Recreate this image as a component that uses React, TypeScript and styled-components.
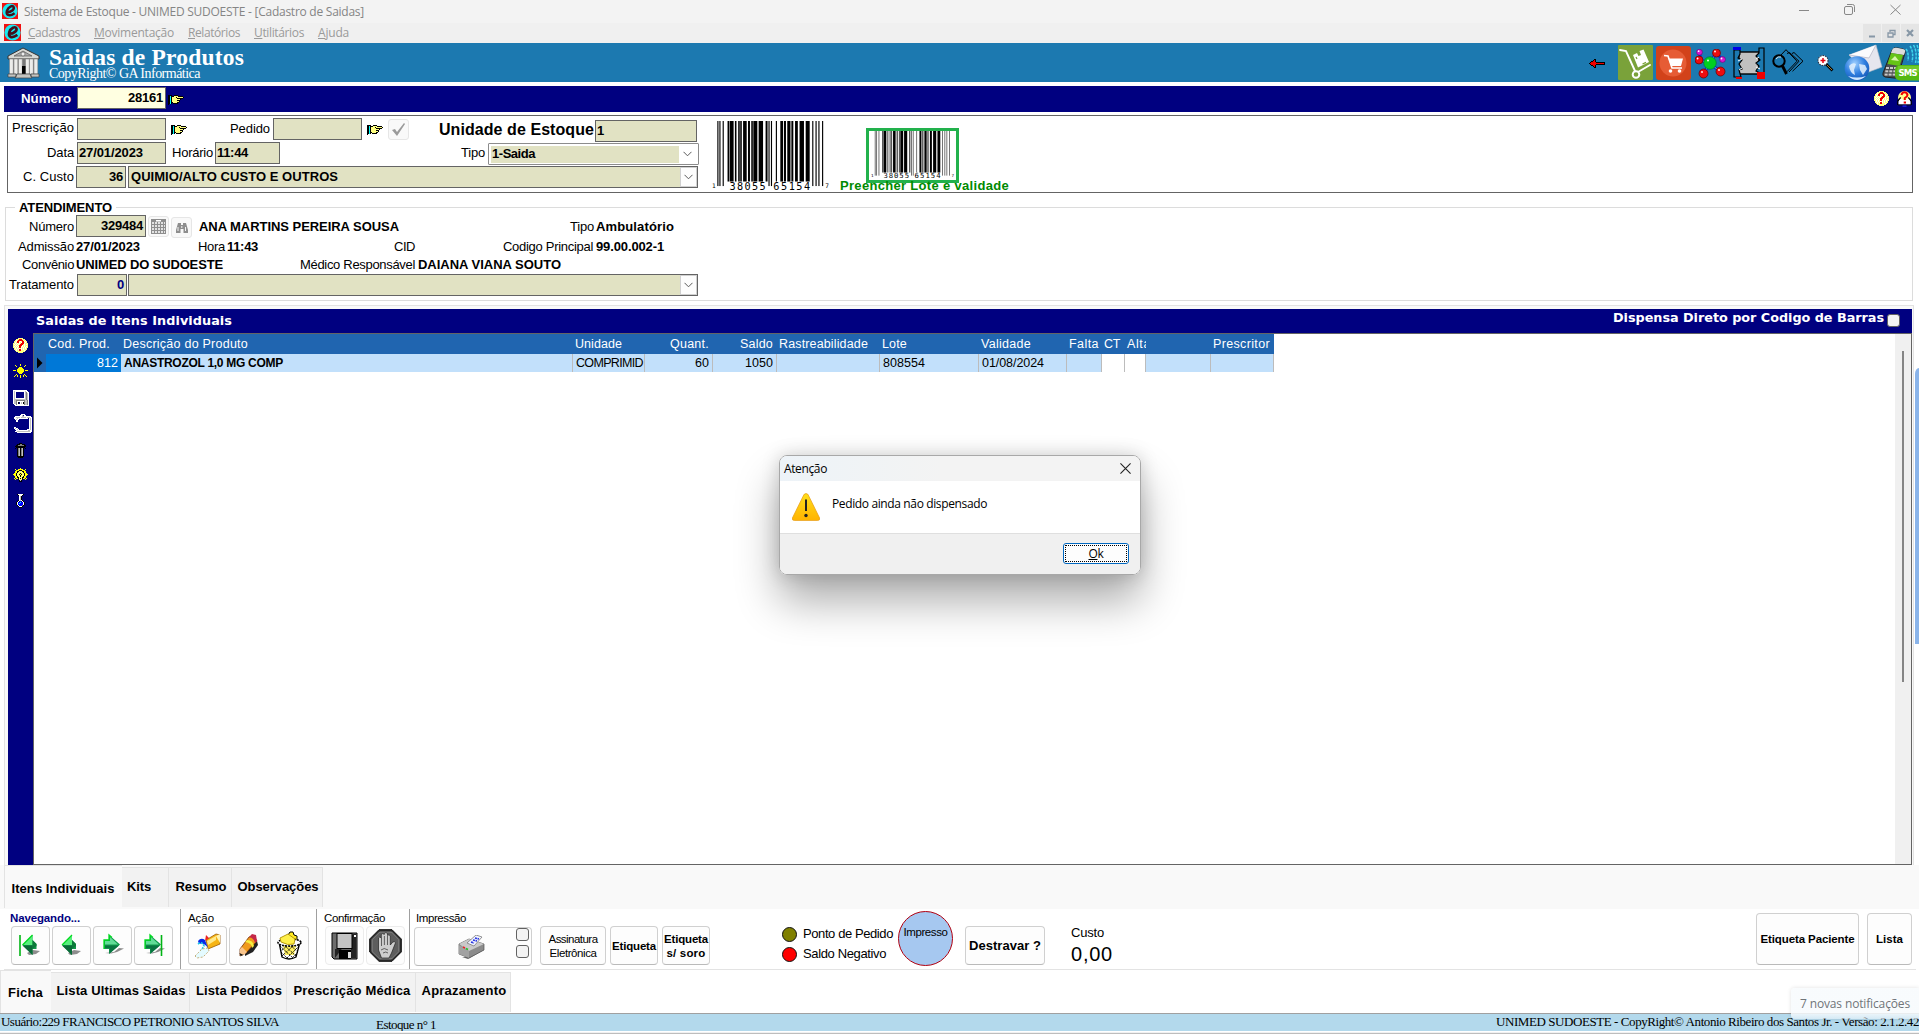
import React, { useLayoutEffect, useRef } from "react";
import styled, { createGlobalStyle, css } from "styled-components";

const SANS = '"Liberation Sans", Arial, sans-serif';
const SERIF = '"Liberation Serif", "Times New Roman", serif';
const UI = '"Open Sans", "Noto Sans", sans-serif';
const NAVY = "#000080";

const Global = createGlobalStyle`
  *{box-sizing:border-box}
  body{margin:0;overflow:hidden;background:#fff;font-family:${SANS};color:#000}
`;

/* ---------- text ---------- */

const FitBox = styled.span<{ $w: number; $ml?: number }>`
  display: block; flex: none; white-space: pre;
  width: ${(p) => p.$w}px; margin-left: ${(p) => p.$ml ?? 0}px;
`;

type FitProps = { w: number; ml?: number; className?: string; children: React.ReactNode };

function Fit({ w, ml, className, children }: FitProps) {
  const ref = useRef<HTMLSpanElement>(null);
  useLayoutEffect(() => {
    const el = ref.current;
    if (!el) return;
    el.style.letterSpacing = "0px";
    const n = (el.textContent || "").length;
    el.style.letterSpacing = `${(w - el.getBoundingClientRect().width) / n}px`;
  }, [w, children]);
  return (
    <FitBox $w={w} $ml={ml} className={className}>
      <span ref={ref}>{children}</span>
    </FitBox>
  );
}

const Caption = styled(Fit)`font: 13px/16px ${SANS};`;
const Value = styled(Fit)`font: bold 13px/16px ${SANS};`;
const SmallCaption = styled(Fit)`font: 11.5px/14px ${SANS};`;
const SmallBold = styled(Fit)`font: bold 11.5px/14px ${SANS};`;
const NavCaption = styled(SmallBold)`color: ${NAVY};`;
const WindowTitle = styled(Fit)`font: 12px/18px ${UI}; color: #858585;`;
const MenuItem = styled(Fit)`font: 12px/17px ${UI}; color: #9a9a9a;`;
const DialogText = styled(Fit)`font: 12px/16px ${UI};`;
const StatusText = styled(Fit)`font: 13px/16px ${SERIF};`;
const NoticeText = styled(Fit)`font: 12px/16px ${UI}; color: #707579;`;
const ScreenTitle = styled(Fit)`font: bold 23.5px/22px ${SERIF}; color: #fff;`;
const ScreenSub = styled(Fit)`font: 14px/12px ${SERIF}; color: #fff;`;
const PanelTitle = styled(Fit)`font: bold 12.8px/16px "DejaVu Sans", Verdana, sans-serif; color: #fff;`;
const BarCaption = styled(Fit)`font: bold 13.3px/16px ${SANS}; color: #fff;`;
const UnitCaption = styled(Fit)`font: bold 16px/18px ${SANS};`;
const GreenNote = styled(Fit)`font: bold 13px/14px ${SANS}; color: #008a00; position: relative; margin-top: -4px;`;
const CostValue = styled(Fit)`font: 20px/22px ${SANS};`;
const HeadText = styled(Fit)`font: 12.5px/20px ${SANS}; color: #fff;`;
const CellText = styled(Fit)`font: 12.5px/19px ${SANS};`;
const CellBold = styled(Fit)`font: bold 12px/19px ${SANS};`;

/* ---------- window chrome ---------- */

const Window = styled.div`width: 1919px; height: 1034px; display: flex; flex-direction: column; overflow: hidden; position: relative;`;
const TitleBar = styled.div`height: 23px; flex: none; background: #f3f3f3; display: flex; align-items: flex-start; padding: 3px 18px 0 2px;`;
const MenuBar = styled.div`height: 20px; flex: none; background: #f0f0f0; display: flex; align-items: flex-start; padding: 1px 0 0 4px;`;
const Spring = styled.div`flex: 1;`;
const Controls = styled.div`display: flex; gap: 35px; padding-top: 1px;`;
const MdiButton = styled.div`width: 18px; height: 18px; background: #e5e5e5; margin-left: 1px; display: grid; place-items: center;`;
const HeaderBar = styled.div`height: 39px; flex: none; background: #1c79b0; display: flex; padding-left: 7px; overflow: hidden;`;
const HeaderText = styled.div`display: flex; flex-direction: column; margin-left: 9px; padding-top: 3px; gap: 0;`;
const ToolIcons = styled.div`display: flex; align-items: flex-start;`;
const Slot = styled.div<{ $ml?: number; $mt?: number }>`
  flex: none; margin-left: ${(p) => p.$ml ?? 0}px; margin-top: ${(p) => p.$mt ?? 0}px; line-height: 0;
  svg { display: block; }
`;

/* ---------- form ---------- */

const NumberBar = styled.div`
  height: 26px; flex: none; margin: 4px 3px 3px 4px; background: ${NAVY};
  display: flex; align-items: flex-start; padding: 1px 4px 0 17px;
`;
const Field = styled.div<{ $w: number; $ml?: number; $bg?: string; $right?: boolean; $color?: string }>`
  flex: none; width: ${(p) => p.$w}px; height: 22px; margin-left: ${(p) => p.$ml ?? 0}px;
  background: ${(p) => p.$bg ?? "#e1e2c3"}; border: 1px solid #646464; color: ${(p) => p.$color ?? "#000"};
  display: flex; align-items: flex-start; padding: 2px 2px 0 1px;
  justify-content: ${(p) => (p.$right ? "flex-end" : "flex-start")};
`;
const Combo = styled(Field)`padding: 0 1px 0 2px; align-items: center; justify-content: space-between;`;
const Select = styled.div`
  width: 211px; height: 22px; margin-left: 3px; flex: none; background: #fff; border: 1px solid #8c8c8c; border-radius: 1px;
  display: flex; align-items: center; padding: 0 2px 0 2px;
`;
const SelectValue = styled.div`width: 188px; height: 17px; background: #e1e2c3; padding-left: 1px;`;
const Arrow = styled.div<{ $boxed?: boolean }>`
  width: 17px; height: 20px; display: grid; place-items: center; margin-left: auto;
  ${(p) => p.$boxed && css`background: #fdfdfd; border: 1px solid #d0d0d0; margin-right: -1px;`}
`;
const OrderPanel = styled.div`
  height: 78px; flex: none; margin: 0 6px 0 7px; border: 1px solid #646464; background: #fff; display: flex;
`;
const OrderForm = styled.div`width: 691px; flex: none; display: flex; flex-direction: column;`;
const Line = styled.div<{ $h: number; $pl?: number; $pt?: number }>`
  display: flex; flex: none; align-items: flex-start; height: ${(p) => p.$h}px;
  padding-left: ${(p) => p.$pl ?? 0}px; padding-top: ${(p) => p.$pt ?? 0}px;
`;
const Drop = styled.div<{ $mt: number }>`flex: none; display: flex; margin-top: ${(p) => p.$mt}px;`;
const TinyButton = styled.div<{ $ml: number; $mt?: number }>`
  width: 21px; height: 21px; flex: none; margin-left: ${(p) => p.$ml}px; margin-top: ${(p) => p.$mt ?? 0}px;
  background: #f9f9f9; border: 1px solid #e6e6e6; border-radius: 3px; display: grid; place-items: center;
`;
const LotCheck = styled.div`display: flex; flex-direction: column; width: 170px; padding-top: 12px; margin-left: 11px;`;
const GreenFrame = styled.div`width: 93px; height: 55px; margin-left: 26px; border: 3px solid #22b14c; background: #fff; padding: 0 0 0 2px; flex: none;`;

const CareGroup = styled.fieldset`
  height: 101px; flex: none; margin: 7px 6px 0 5px; padding: 0; min-width: 0; border: 1px solid #dcdcdc;
  display: flex; flex-direction: column; background: #fff;
`;
const CareLegend = styled.legend`margin-left: 9px; padding: 0 4px; height: 15px; line-height: 15px;`;

/* ---------- items panel ---------- */

const ItemsFrame = styled.div`
  height: 560px; flex: none; margin: 4px 5px 0 4px; border-top: 1px solid #e3e3e3; border-left: 1px solid #e3e3e3;
  border-right: 1px solid #e3e3e3; background: #f9f9f9; padding: 3px 1px 0 3px; display: flex; flex-direction: column;
`;
const ItemsTitle = styled.div`height: 24px; flex: none; background: ${NAVY}; display: flex; padding-left: 28px; align-items: flex-start;`;
const ItemsBody = styled.div`flex: 1; display: flex; min-height: 0;`;
const SideTools = styled.div`width: 25px; flex: none; background: ${NAVY}; display: flex; flex-direction: column; align-items: center;`;
const GridArea = styled.div`
  flex: 1; background: #fff; border: 1px solid #646464; display: flex; align-items: flex-start; min-width: 0;
`;
const Columns = "12px 75px 452px 72px 68px 64px 103px 99px 88px 35px 23px 21px 65px 63px";
const GridHead = styled.div`display: grid; grid-template-columns: ${Columns}; height: 20px; background: #2065b0; align-items: center;`;
const GridRow = styled.div`display: grid; grid-template-columns: ${Columns}; height: 18px;`;
const HeadCell = styled.div<{ $right?: boolean }>`
  display: flex; overflow: hidden; padding: 0 4px 0 2px; justify-content: ${(p) => (p.$right ? "flex-end" : "flex-start")};
`;
const Cell = styled.div<{ $right?: boolean; $bg?: string; $flat?: boolean }>`
  display: flex; overflow: hidden; padding: 0 3px; justify-content: ${(p) => (p.$right ? "flex-end" : "flex-start")};
  background: ${(p) => p.$bg ?? "#c2e0fb"}; color: ${(p) => (p.$flat ? "#fff" : "#000")};
  border-right: ${(p) => (p.$flat ? "none" : "1px solid #bcbcbc")};
`;
const MarkerCell = styled(Cell)`padding: 0 2px;`;
const Scroll = styled.div`width: 16px; margin-left: auto; align-self: stretch; background: #f0f0f0; padding: 17px 0 0 7px;`;
const Thumb = styled.div`width: 2px; height: 331px; background: #858585;`;
const CheckBox = styled.div<{ $ml?: number; $mt?: number }>`
  width: 13px; height: 13px; flex: none; border: 1px solid #626262; border-radius: 3px; background: #f3f3f3;
  margin-left: ${(p) => p.$ml ?? 0}px; margin-top: ${(p) => p.$mt ?? 0}px;
`;

/* ---------- tabs, toolbar, status ---------- */

const TabStrip = styled.div<{ $h: number; $bg: string; $pl: number }>`
  height: ${(p) => p.$h}px; flex: none; background: ${(p) => p.$bg}; padding-left: ${(p) => p.$pl}px; display: flex; align-items: flex-start;
`;
const Tab = styled.div<{ $w: number; $active?: boolean; $h: number; $top?: number }>`
  width: ${(p) => p.$w}px; flex: none; display: flex; justify-content: center;
  ${(p) => p.$active
    ? css`height: ${p.$h + 3}px; background: #f9f9f9; border: solid #e3e3e3; border-width: 1px 0 0 1px; padding: ${p.$top ?? 15}px 1px 0 0;`
    : css`height: ${p.$h}px; margin-top: 2px; background: #f2f2f2; border: solid #e3e3e3; border-width: 1px 1px 0 0; padding: ${p.$top ?? 11}px 0 0 2px;`}
`;
const Toolbar = styled.div`height: 61px; flex: none; background: #fff; margin: 0 3px 0 4px; border-bottom: 1px solid #e3e3e3; display: flex; padding-left: 6px;`;
const Group = styled.div<{ $w: number; $sep?: boolean; $pl?: number }>`
  width: ${(p) => p.$w}px; flex: none; padding-left: ${(p) => p.$pl ?? 0}px; padding-top: 2px;
  border-right: ${(p) => (p.$sep ? "1px solid #a0a0a0" : "none")}; display: flex; flex-direction: column; gap: 1px;
`;
const Buttons = styled.div<{ $ml?: number }>`display: flex; gap: 2px; margin-left: ${(p) => p.$ml ?? 0}px;`;
const PushButton = styled.div<{ $w?: number; $h?: number; $ml?: number; $mt?: number; $faint?: boolean }>`
  width: ${(p) => p.$w ?? 39}px; height: ${(p) => p.$h ?? 39}px; flex: none;
  margin-left: ${(p) => p.$ml ?? 0}px; margin-top: ${(p) => p.$mt ?? 0}px;
  border: 1px solid ${(p) => (p.$faint ? "#ececec" : "#d0d0d0")}; border-bottom-color: ${(p) => (p.$faint ? "#ececec" : "#bababa")};
  border-radius: 4px; background: #fdfdfd; display: flex; flex-direction: column; align-items: center; justify-content: center;
  svg { display: block; }
`;
const PrintButton = styled(PushButton)`flex-direction: row; justify-content: flex-end; padding-right: 2px; align-items: flex-start;`;
const CheckStack = styled.div`display: flex; flex-direction: column; gap: 4px; margin-left: 30px;`;
const Legend = styled.div`display: flex; flex-direction: column; gap: 4px; margin-left: 72px; padding-top: 17px;`;
const LegendRow = styled.div`display: flex; align-items: center; height: 16px;`;
const Dot = styled.span<{ $c: string }>`width: 15px; height: 15px; border-radius: 50%; border: 1px solid #111; background: ${(p) => p.$c}; margin-right: 6px;`;
const PrintedBadge = styled.div`
  width: 55px; height: 55px; border-radius: 50%; background: #a6c8f0; border: 1px solid #b00010; flex: none;
  margin: 2px 0 0 5px; padding-top: 13px; display: flex; justify-content: center;
`;
const Cost = styled.div`margin-left: 26px; padding-top: 16px; display: flex; flex-direction: column; gap: 2px;`;
const StatusBar = styled.div`
  height: 18px; flex: none; background: #b3d9ec; border-top: 1px solid #a0a0a0; display: flex; align-items: flex-start; padding-left: 1px;
`;
const StatusEdge = styled.div`height: 3px; flex: none; background: #f0f0f0; border-top: 1px solid #fff; border-bottom: 1px solid #bdbdbd;`;

/* ---------- floating pieces ---------- */

const EdgeHandle = styled.div`position: absolute; right: 0; top: 368px; width: 4px; height: 276px; background: #8ab4ea; border-top-left-radius: 4px 6px;`;
const Notice = styled.div`
  position: absolute; right: 0; top: 988px; width: 128px; height: 31px; padding: 8px 0 0 9px; border-radius: 4px 0 0 4px;
  background: linear-gradient(rgba(248, 251, 253, 0.97) 75%, rgba(240, 247, 252, 0.55)); box-shadow: 0 0 4px rgba(0, 0, 0, 0.12);
`;
const Dialog = styled.div`
  position: absolute; left: 779px; top: 455px; width: 362px; height: 120px; border: 1px solid #a8a8a8; border-radius: 8px; overflow: hidden;
  background: #fff; display: flex; flex-direction: column;
`;
const DialogShade = styled.div`
  position: absolute; left: 779px; top: 455px; width: 362px; height: 120px; border-radius: 8px;
  box-shadow: 0 26px 44px rgba(0, 0, 0, 0.33), 0 0 18px rgba(0, 0, 0, 0.17);
`;
const DialogTitle = styled.div`height: 25px; flex: none; background: linear-gradient(90deg, #edf3f8, #f3f3f3 45%); display: flex; padding: 5px 9px 0 4px; justify-content: space-between;`;
const DialogBody = styled.div`height: 52px; flex: none; display: flex; padding: 12px 0 0 12px;`;
const DialogFoot = styled.div`flex: 1; background: #f0f0f0; border-top: 1px solid #dfdfdf; display: flex; justify-content: flex-end; padding: 9px 11px 0 0;`;
const OkButton = styled.div`width: 66px; height: 21px; border: 1px solid #0067c0; border-radius: 3px; background: #fdfdfd; padding: 1px;`;
const OkFocus = styled.div`height: 17px; border: 1px dotted #000; display: flex; justify-content: center;`;
const OkText = styled(Fit)`font: 12px/15px ${UI};`;

/* ---------- drawings ---------- */

const PALETTE: Record<string, string> = {
  k: "#000", w: "#fff", y: "#ffff80", Y: "#ffff00", c: "#00ffff", r: "#f00000", g: "#808080", l: "#c0c0c0", b: "#0000ff",
};

function Pixels({ rows }: { rows: string[] }) {
  const w = Math.max(...rows.map((r) => r.length));
  return (
    <svg width={w} height={rows.length} viewBox={`0 0 ${w} ${rows.length}`} shapeRendering="crispEdges">
      {rows.flatMap((row, y) =>
        row.split("").map((ch, x) => (PALETTE[ch] ? <rect key={`${x}-${y}`} x={x} y={y} width={1} height={1} fill={PALETTE[ch]} /> : null))
      )}
    </svg>
  );
}

const HAND = [
  "kkkk..kkkk......",
  "kkckkkyyyykkkkk.",
  "kkckyyyykyyyyyyk",
  "kkckyyyyykkkkkk.",
  "kkckyyyyyyyyk...",
  "kkckyyyyykkk....",
  "kkckyyyyyyyk....",
  "kkckkyyyykk.....",
  "kkck.kkkkk......",
  "k...............",
];
const HELP = [
  ".....yyyyy.....",
  "...yyyrrryyy...",
  "..ywyrrrrryyy..",
  ".yywrrywyrrwyy.",
  ".ywyrrwywrrywy.",
  "yywywywyrrrwyyy",
  "ywywywyrrrywywy",
  "yywywyrrrwywyyy",
  "ywywywrrywywywy",
  "yywywyrrwywywyy",
  ".ywywywywywywy.",
  ".yywywrrwywyyy.",
  "..ywyyrryyywy..",
  "...yyyyyyyyy...",
  ".....yyyyy.....",
];
const SUN = [
  ".......Y.......",
  "..Y....Y....Y..",
  "...Y.......Y...",
  "......YYY......",
  ".....YYYYY.....",
  "....YYYYYYY....",
  "YYY.YYYYYYY.YYY",
  "....YYYYYYY....",
  ".....YYYYY.....",
  "......YYY......",
  "...Y.......Y...",
  "..Y.Y..Y..Y.Y..",
  ".Y..Y..Y..Y..Y.",
  ".......Y.......",
];
const DISK = [
  "wwwwwwwwwwwwww..",
  "wlwwwwwwwwwwlww.",
  "wlw........wlgww",
  "wlw........wlglw",
  "wlw........wlglw",
  "wlw........wlglw",
  "wlw........wlglw",
  "wlw........wlglw",
  "wlwwwwwwwwwwlglw",
  "wllllllllllllglw",
  "wllgggggggggllgw",
  "wllgwwwwwwwgllgw",
  "wllgwk.wlwkgllgw",
  "wllgwk.wlwkgllgw",
  ".wwgwwwwwwwgllgw",
  "..wwwwwwwwwwwwww",
];
const CLIP = [
  ".......wwww.......",
  "......wwl.ww......",
  ".wwwwwwwllwwwwwww.",
  "wwllllwlllllwlllww",
  "wwwlwwwwwwwwww.wlw",
  ".wlww..........wlw",
  "..ww...........wlw",
  "..ww...........wlw",
  "...............wlw",
  "...............wlw",
  "...............wlw",
  "...............wlw",
  "...............wlw",
  "ww.............wlw",
  "wlww...........wlw",
  ".wwlw........wwwlw",
  "..wwwwwwwwwwwwllww",
  ".wwlllllllllllllww",
  "...wwwwwwwwwwwwww.",
];
const TRASH = [
  "....kkk....",
  "..kkkggkkk.",
  ".kkggggggkk",
  "kkkkkkkkkkk",
  ".kkkkkkkkk.",
  "k.kglkglk.k",
  "..kglkglk..",
  "..kglkglk..",
  "..kglkglk..",
  "..kglkglk..",
  "..kglkglk..",
  "..kglkglk..",
  "..kglkglk..",
  "..kkkkkkk..",
  "...kkkkk...",
];
const BULB = [
  ".......Y.......",
  "..Y..YYYYY..Y..",
  "...YYYkkkYYY...",
  "..YYkkyyykkYY..",
  "..YYkyyyyykYY..",
  ".YYkyyYkYyykYY.",
  "YYYkyykykyykYYY",
  ".YYkyyYkYyykYY.",
  "..YYkyykyykYY..",
  "..YYkkyyykkYY..",
  ".Y.YYkykykYY.Y.",
  "..Y..kyyyk..Y..",
  "......klk......",
  "......kkk......",
];
const FLASK = [
  ".kwwwwwk.",
  "..kwwwk..",
  "...wlk...",
  "...wlk...",
  "...wlk...",
  "...wlk...",
  "..kwlwk..",
  ".kw.b.wk.",
  "kwbbcbbwk",
  "kwbcbbbwk",
  "kwbbbbbwk",
  ".kwbbbgk.",
  "..kwwwk..",
  "...kkk...",
];
const RED_ARROW = [
  ".....kk.........",
  "....krk.........",
  "..kkrrk.........",
  ".krrrrrkkkkkkkkk",
  "krrrrrrrrrrrrrrk",
  ".krrrrrkkkkkkkkk",
  "..kkrrk.........",
  "....krk.........",
  ".....kk.........",
];

const AppIcon = ({ s }: { s: number }) => (
  <svg width={s} height={s} viewBox="0 0 16 16">
    <rect width="16" height="16" fill="#f01010" />
    <circle cx="8" cy="8" r="7.600" fill="#18e8f0" />
    <path d="M5 9.200C9.500 9.200 12.600 6.200 11.600 4 10.600 2 6.400 3.600 5 7.600 3.800 11.600 6.600 14.400 12.600 10.200" fill="none" stroke="#42101c" strokeWidth="2.500" />
  </svg>
);

const Bank = () => (
  <svg width="33" height="32" viewBox="0 0 33 32">
    <path d="M1 9L16 1l16 8v3H1z" fill="#d8d8d4" stroke="#333" />
    <path d="M7 9l9-5 9 5z" fill="#aaa" stroke="#555" strokeWidth=".7" />
    <circle cx="16" cy="7" r="2" fill="#eee" stroke="#555" strokeWidth=".6" />
    <path d="M3 12h27v15H3z" fill="#777" />
    {[2.5, 7, 11.5, 18.5, 22.5, 27].map((x) => <path key={x} d={`M${x} 12h3.800v15H${x}z`} fill="#ececea" stroke="#777" strokeWidth=".5" />)}
    <path d="M15 19h3.500v8H15z" fill="#000" />
    <path d="M10 27h13l2 4H8zM1 27h8v3H1zM24 27h8v3h-8z" fill="#c4c4c0" stroke="#444" strokeWidth=".7" />
  </svg>
);

const Dolly = () => (
  <svg width="35" height="35" viewBox="0 0 35 35">
    <rect width="35" height="35" rx="1" fill="#7aa23a" />
    <path d="M2 5l6 1 9 20M20 27l12-7" fill="none" stroke="#fff" strokeWidth="1.900" strokeLinecap="round" />
    <path d="M15 10l4-2 1.500 3 2.500-1L21.500 6l4-1.500L31 17l-11 5.500z" fill="#fff" />
    <path d="M24.500 19l3.500-1.600M18 12l1 2" stroke="#7aa23a" strokeWidth="1.200" />
    <circle cx="18" cy="29.500" r="3.300" fill="#7aa23a" stroke="#fff" strokeWidth="2" />
  </svg>
);

const Cart = () => (
  <svg width="35" height="34" viewBox="0 0 35 34">
    <rect width="35" height="34" rx="3" fill="#d2421a" />
    <circle cx="17" cy="17" r="13.500" fill="#e65c35" />
    <path d="M8 9.500l4 .5 4 12h10" fill="none" stroke="#fff" strokeWidth="1.600" />
    <path d="M12.500 12.500h14.500l-2 7.500H15z" fill="#fff" />
    <circle cx="14.500" cy="25" r="1.800" fill="#fff" /><circle cx="23.500" cy="25" r="1.800" fill="#fff" />
  </svg>
);

const Molecule = () => (
  <svg width="32" height="30" viewBox="0 0 32 30">
    <path d="M5 11l9 3 8-10M9 23l6-8 10 7M22 5l6 6M5 3v8" stroke="#0030d0" strokeWidth="3" fill="none" />
    <path d="M5 11l9 3 8-10M9 23l6-8 10 7" stroke="#9ab8f0" strokeWidth=".8" fill="none" />
    <circle cx="15" cy="14" r="6.300" fill="#00d020" stroke="#064" strokeWidth=".6" />
    {[[4, 11, 4], [21.5, 4, 4], [8.5, 24.5, 4.5], [25.5, 22.5, 4.5]].map(([x, y, r]) => <circle key={x} cx={x} cy={y} r={r} fill="#ee0c10" stroke="#600" strokeWidth=".7" />)}
    <circle cx="4.500" cy="3.200" r="2.900" fill="#d818d0" stroke="#606" strokeWidth=".6" />
    <circle cx="27.500" cy="10.500" r="2.900" fill="#d818d0" stroke="#606" strokeWidth=".6" />
    {[[2.6, 9.5], [20, 2.5], [7, 23], [24, 21], [13, 11.5], [3.6, 2.2], [26.5, 9.5]].map(([x, y]) => <circle key={x} cx={x} cy={y} r=".9" fill="#fff" />)}
  </svg>
);

const Puzzle = () => (
  <svg width="32" height="32" viewBox="0 0 32 32">
    <rect x="6" y="5" width="20" height="22" fill="#c0c0c0" stroke="#000" strokeWidth="1.400" />
    <path d="M1 3h6v4l-2 4 4 2-3 4 3 5-3 1 2 7H1zM31 1h-5v5l-3 3 4 4-4 3 3 3-3 5 4 2h4z" fill="#1c79b0" stroke="#000" strokeWidth="1.200" />
    <path d="M9 12l-4 2M9 21l-3 2M23 12l3-2M23 20l4 2" stroke="#fff" strokeWidth="1" fill="none" />
    <path d="M0 0h8v3H0z" fill="#0000e8" />
    <path d="M3 30h6v2H3zM24 25h8v7h-8z" fill="#f00000" />
  </svg>
);

const SearchLayers = () => (
  <svg width="32" height="28" viewBox="0 0 32 28" fill="none" stroke="#000">
    <path d="M8 7l6-6.300 11 11.500-10 10.500M15 4.500l2.500-1 9.500 8.700L17 23M20 4.500l2-1 9 8.700-10.500 10" strokeWidth="1" />
    <circle cx="7" cy="12" r="5.700" strokeWidth="2" />
    <path d="M4 10q2-3 5-2" stroke="#ddd" />
    <path d="M10.500 17l4 8" strokeWidth="2.800" />
  </svg>
);

const ZoomIcon = () => (
  <svg width="17" height="17" viewBox="0 0 17 17">
    <path d="M9 9l6.500 6.500" stroke="#000" strokeWidth="2.600" /><path d="M10 10l5 5" stroke="#c8a040" strokeWidth=".8" />
    <circle cx="6" cy="5.500" r="5" fill="#fff" stroke="#334" strokeWidth="1.100" strokeDasharray="1.500 1" />
    <path d="M6 3v5M3.500 5.500h5" stroke="#e00010" strokeWidth="1.500" />
  </svg>
);

const GlobeMail = () => (
  <svg width="39" height="37" viewBox="0 0 39 37">
    <defs>
      <radialGradient id="globe" cx=".4" cy=".3" r=".75"><stop offset="0" stopColor="#9fd0ff" /><stop offset=".55" stopColor="#2f7fe0" /><stop offset="1" stopColor="#1556b4" /></radialGradient>
    </defs>
    <path d="M5 11L32 1l6 22-16 6z" fill="#e6e6ee" stroke="#b4b8c8" strokeWidth=".6" />
    <path d="M5 11l20 3 7-13" fill="#fbfbfd" stroke="#b9b9c8" strokeWidth=".8" />
    <circle cx="13" cy="24.500" r="12.300" fill="url(#globe)" />
    <path d="M5 22q3-4 7-2l-1 3-1 3 1 5q-5-2-6-9zM15 20l6 1 2 4-4 6-3-5z" fill="#e4f1fd" opacity=".85" />
    <path d="M4 32q9 8 18 0-9 3-18 0z" fill="#cfe8ff" />
  </svg>
);

const SmsPhone = () => (
  <svg width="37" height="37" viewBox="0 0 37 37">
    <path d="M10 6q1-3 6-2l5 1q3 1 2 4l-7 23q-1 3-4 2l-9-1q-3-1-2-4z" fill="#4a4d50" stroke="#222" />
    <path d="M10 6q1-3 6-2l5 1q3 1 2 3l-1 3-13-2z" fill="#dcdcdc" />
    <path d="M9 9l12 2-3.500 11L5.500 20z" fill="#65c416" /><path d="M9 16l4-4 4 5z" fill="#d7f5a8" />
    {[0, 1, 2].map((r) => [0, 1, 2].map((c) => <rect key={`${r}${c}`} x={4 + c * 4 - r * 0.7} y={23 + r * 3.3} width="3" height="2" fill="#c9c9c9" />))}
    <path d="M24 5q3 4 2 12M28 2q4 6 2 16M31.500 1q4 7 2 18M35 1q3 8 1 18" fill="none" stroke="#3fd6ee" strokeWidth="1.500" strokeDasharray="3 1" />
    <rect x="13" y="21" width="28" height="15.500" rx="5" fill="#55b912" /><path d="M16 22h24v6H15z" fill="#83d43c" opacity=".6" />
    <text x="16.500" y="32" fontFamily="DejaVu Sans" fontWeight="bold" fontSize="8.500" fill="#fff" textLength="19">SMS</text>
  </svg>
);

const HelpBook = () => (
  <svg width="15" height="16" viewBox="0 0 15 16">
    <circle cx="7.500" cy="6.500" r="6.500" fill="#ffff90" />
    <path d="M.7 14V10l3-3.500M14.300 14V10l-3-3.500" fill="none" stroke="#000" strokeWidth="1.200" />
    <path d="M1.500 13.500V10.500L4 7.500l3.500 2 3.500-2 2.500 3v3z" fill="#fff" />
    <path d="M1 14h13" stroke="#111" />
    <path d="M4.500 4Q5 1.300 7.500 1.300T10.500 4Q10.500 5.500 7.800 7V9" fill="none" stroke="#f00000" strokeWidth="2" />
    <path d="M6.700 10.500h2.300v2H6.700z" fill="#f00000" /><path d="M5.500 14.500h4v1.200h-4z" fill="#22f" />
  </svg>
);

const Chevron = () => <svg width="9" height="6" viewBox="0 0 9 6"><path d="M.5 .8l4 4 4-4" fill="none" stroke="#5a5a5a" /></svg>;

/* [x, width] of each bar, in the drawing's own units */
const BARS: [number, number][] = [
  [13, 2], [18, 2], [26, 2], [38, 3], [43, 9], [56, 3], [64, 3], [69, 3], [76, 8], [88, 4], [96, 3], [101, 9], [114, 10],
  [131, 4], [138, 2], [144, 2], [156, 2], [167, 6], [176, 4], [184, 7], [194, 4], [203, 6], [214, 10], [229, 9], [245, 2], [253, 2], [260, 2], [269, 2],
];
const isGuard = (x: number) => x < 30 || (x > 134 && x < 148) || x > 240;

const BarSvg = styled.svg`overflow: visible;`;

const Barcode = ({ w, h, soft }: { w: number; h: number; soft?: boolean }) => (
  <BarSvg width={w} height={h} viewBox="0 0 286 170" preserveAspectRatio="none">
    {BARS.map(([x, bw]) => <rect key={x} x={x} y={0} width={bw + 0.8} height={isGuard(x) ? 158 : 147} fill={soft && bw < 5 ? "#555" : "#000"} />)}
    <g fontFamily="DejaVu Sans Mono" fontSize="25" fill="#000">
      <text x="43" y="168" textLength="88" lengthAdjust="spacing">38055</text>
      <text x="150" y="168" textLength="90" lengthAdjust="spacing">65154</text>
      <text x="0" y="163" fontSize="15">1</text>
      <text x="277" y="163" fontSize="15">7</text>
    </g>
  </BarSvg>
);

const CheckMark = () => <svg width="15" height="15" viewBox="0 0 15 15"><path d="M1 8l3-1 2 3 7-9 1 1-8 12z" fill="#9a9a9a" /></svg>;
const Calendar = () => (
  <svg width="17" height="17" viewBox="0 0 17 17">
    <rect x="1" y="1" width="15" height="15" fill="#8e8e8e" /><path d="M6 2h5v1.500H6z" fill="#fff" />
    {[5, 8, 11, 14].map((y) => <path key={y} d={`M2 ${y}h13`} stroke="#fff" strokeDasharray="2 1" strokeWidth="1.500" />)}
  </svg>
);
const Binoculars = () => (
  <svg width="14" height="13" viewBox="0 0 14 13">
    <path d="M3 2h3v2h2V2h3l2 7v3H8.500V8h-3v4H1V9z" fill="#8e8e8e" /><path d="M3 6v4M10.500 6v4M6.800 5v2" stroke="#fff" strokeWidth=".9" />
  </svg>
);

const LEFT_HEAD = (
  <>
    <path d="M3 12L13 2v5l4 4v5l-4 0v6z" fill="#12984a" />
    <path d="M3 12L13 2v10z" fill="#58ee7e" />
    <path d="M13 7l4 4v2l-4 3z" fill="#0b7a3a" />
    <path d="M3 12.500h10V22z" fill="#0a6a38" />
    <path d="M3 12L13 2" stroke="#00dc20" strokeWidth="1.300" />
  </>
);
const RIGHT_HEAD = (
  <>
    <path d="M4 7h5V2l11 9.500L9 21v-5H4z" fill="#109c4c" />
    <path d="M5 8h5V4l8 7.500H5z" fill="#62dc98" />
    <path d="M5 12.500h14L9.500 20.500V15H5z" fill="#0a7442" />
    <path d="M4 16V7h5V2l3 2.500" fill="none" stroke="#00dc20" strokeWidth="1.300" />
  </>
);

const NavArrow = ({ kind }: { kind: "first" | "prev" | "next" | "last" }) => {
  const right = kind === "next" || kind === "last";
  return (
    <svg width="25" height="25" viewBox="0 0 25 25">
      <path d={right ? "M5 20l9-1 5-4 5 .5-7 3.500-6 1.500z" : "M9 20l6-3 7 1-4 3-7 1z"} fill="#8d8d8d" />
      {right ? RIGHT_HEAD : <g transform={kind === "first" ? "translate(1.500 0)" : undefined}>{LEFT_HEAD}</g>}
      {kind === "first" && <path d="M2 2v21" stroke="#00b414" strokeWidth="1.600" />}
      {kind === "last" && <path d="M20.500 2v21" stroke="#00b414" strokeWidth="1.600" />}
    </svg>
  );
};

const NewIcon = () => (
  <svg width="27" height="27" viewBox="0 0 27 27">
    <path d="M12 8l10-6 4 1v9l-12 5z" fill="#f6b414" stroke="#9c5a00" strokeWidth=".8" /><path d="M13 9l9-5v4l-8 5z" fill="#ffe98a" /><path d="M22 4l4-2v9z" fill="#fff3b0" />
    <path d="M12 3l3 3-4 3z" fill="#f02020" />
    <path d="M4 9q3-4 7-1l3 8q-4-6-9-4z" fill="#0828e8" /><path d="M4 12q4-3 6 2l-4 6" fill="none" stroke="#18c8e8" strokeWidth="1.600" strokeDasharray="2 1" />
    <path d="M1 24l7-7 6-1 1 3-6 6-6 1z" fill="#e4fbff" stroke="#c0a870" strokeWidth=".9" strokeDasharray="2 1.500" />
  </svg>
);
const PencilIcon = () => (
  <svg width="24" height="25" viewBox="0 0 24 25">
    <path d="M8 23l8-4 5-7-1-4-12 11z" fill="#222" />
    <path d="M3 16L12 4l5-1 3 5L9 20l-6 3z" fill="#f09a1c" stroke="#743000" strokeWidth=".8" />
    <path d="M3 16l2-2 5 5-2 2-5 2z" fill="#f9c58c" /><path d="M12 4l3-3 4 1 1 6-2 2q-1-5-6-6z" fill="#c42848" /><path d="M10 7q6 0 7 6l-2 2q0-5-7-6z" fill="#f4ee40" />
    <path d="M2.500 20l1 3 3-1z" fill="#111" />
  </svg>
);
const BinIcon = () => (
  <svg width="27" height="31" viewBox="0 0 27 31">
    <path d="M14 2h3l1 3 3 1v7H7z" fill="#ffe81e" stroke="#000" />
    <path d="M3 12l3 15q7 4 14 0l4-15" fill="#fff" stroke="#000" strokeWidth="1.300" />
    <path d="M7 16h13l-2 9H9z" fill="#fff060" />
    <path d="M4 16l13 12M5 22l7 7M8 15l12 11M14 15l7 6M23 16L10 29M22 22l-7 7M18 15L6 26M12 15l-7 6" stroke="#000" strokeWidth=".9" strokeDasharray="2 1" />
    <ellipse cx="13.500" cy="12.500" rx="11.500" ry="3.600" fill="#fff" stroke="#000" strokeWidth="1.600" strokeDasharray="2 1" />
    <path d="M4 8l8-4 7 5-1 5q-6 2-13-2z" fill="#fff04a" stroke="#b09000" strokeWidth=".9" />
  </svg>
);
const FloppyIcon = () => (
  <svg width="27" height="28" viewBox="0 0 27 28">
    <path d="M1 1h25v26H3l-2-2z" fill="#6c6c6c" stroke="#000" /><path d="M22 2h3v24h-5V17H4v9" fill="#222" />
    <rect x="6" y="1.500" width="15" height="15" fill="#c4c4c4" stroke="#000" /><path d="M8 18h12v9H8z" fill="#000" /><path d="M17 20h3v6h-3z" fill="#ddd" /><path d="M23 3h2v2h-2z" fill="#fff" />
  </svg>
);
const StopHand = () => (
  <svg width="33" height="33" viewBox="0 0 33 33">
    <path d="M10 .7h13l9.300 9.300v13L23 32.300H10L.7 23V10z" fill="#2e2e2e" stroke="#111" /><path d="M10.600 3h12L30 10.600v12L22.600 30h-12L3 22.600v-12z" fill="#5d5d5d" stroke="#999" strokeWidth=".8" />
    <path d="M9.500 21V9q1.300-2 2.800 0V5.500q1.400-2 3 0V4.500q1.500-2 3.200 0v2q1.400-1.500 2.800.4V16l2.500-3q2-1 2.700.8L22.500 24l-2.500 5h-7.500z" fill="#cdcdcd" stroke="#222" strokeWidth=".7" />
    <path d="M12.500 9v8M15.400 7v9M18.500 7v9M12 21q3-3 7 0M14 24q3-2 5 0" stroke="#444" strokeWidth=".8" fill="none" />
  </svg>
);
const Printer = () => (
  <svg width="28" height="25" viewBox="0 0 28 25">
    <path d="M4 22l6 2 16-9v-2L10 22z" fill="#666" />
    <path d="M1 9l10-5 15 5v6l-15 8-10-4z" fill="#8b8b8b" stroke="#555" strokeWidth=".7" /><path d="M1 9l10-5 15 5-15 7z" fill="#c9c9c9" /><path d="M1 10l10 6v7L1 19z" fill="#a2a2a2" />
    <path d="M9 8l9-8 6 2-8 9z" fill="#f2f4ff" stroke="#7c7c7c" strokeWidth=".8" /><path d="M13 7l3 1M15 5l4 1M17 3l4 1" stroke="#2634e0" strokeWidth="1.600" strokeDasharray="2 .6" />
    <path d="M5 12l2 1" stroke="#f02020" strokeWidth="1.500" /><path d="M8 13.500l2 1" stroke="#20c020" strokeWidth="1.500" />
  </svg>
);
const Warning = () => (
  <svg width="28" height="28" viewBox="0 0 28 28">
    <defs><linearGradient id="warn" x1="0" y1="0" x2="0" y2="1"><stop offset="0" stopColor="#ffdf1a" /><stop offset="1" stopColor="#ffb300" /></linearGradient></defs>
    <path d="M12 1.500q2-2 4 0L27.600 25q.6 2.500-2 2.600H2.400Q-.2 27.500.4 25z" fill="url(#warn)" stroke="#e69a10" strokeWidth=".7" />
    <path d="M14 6.500v11.500" stroke="#222" strokeWidth="2" /><circle cx="14" cy="22.500" r="1.700" fill="#222" />
  </svg>
);
const Cross = ({ s, c }: { s: number; c: string }) => <svg width={s} height={s} viewBox="0 0 10 10"><path d="M.4 .4l9.200 9.200M9.600 .4L.4 9.600" stroke={c} strokeWidth="1" /></svg>;

/* ---------- sections ---------- */

const Top = () => (
  <>
    <TitleBar>
      <Slot><AppIcon s={16} /></Slot>
      <WindowTitle w={340} ml={6}>Sistema de Estoque - UNIMED SUDOESTE - [Cadastro de Saidas]</WindowTitle>
      <Spring />
      <Controls>
        <svg width="10" height="11"><path d="M0 6.500h10" stroke="#888" /></svg>
        <svg width="11" height="11" fill="none" stroke="#888"><rect x=".5" y="2.500" width="8" height="8" rx="1.500" /><path d="M3 .5h5.500q2 0 2 2V8" /></svg>
        <svg width="11" height="11" viewBox="0 0 11 11"><path d="M.5 1l10 9.500M10.500 1l-10 9.500" stroke="#888" /></svg>
      </Controls>
    </TitleBar>
    <MenuBar>
      <Slot><AppIcon s={17} /></Slot>
      <MenuItem w={52} ml={7}><u>C</u>adastros</MenuItem>
      <MenuItem w={80} ml={14}><u>M</u>ovimentação</MenuItem>
      <MenuItem w={52} ml={14}><u>R</u>elatórios</MenuItem>
      <MenuItem w={50} ml={14}><u>U</u>tilitários</MenuItem>
      <MenuItem w={31} ml={14}><u>A</u>juda</MenuItem>
      <Spring />
      <MdiButton><svg width="7" height="9"><path d="M0 7.500h6" stroke="#8797a6" strokeWidth="2" /></svg></MdiButton>
      <MdiButton><svg width="9" height="9" fill="none" stroke="#8797a6" strokeWidth="1.300"><path d="M3 3V1.500h5v4H6.500M1 4h5v4H1z" /></svg></MdiButton>
      <MdiButton><svg width="8" height="8"><path d="M1 1l6 6M7 1L1 7" stroke="#8797a6" strokeWidth="2.200" /></svg></MdiButton>
    </MenuBar>
    <HeaderBar>
      <Slot $mt={4}><Bank /></Slot>
      <HeaderText>
        <ScreenTitle w={195}>Saidas de Produtos</ScreenTitle>
        <ScreenSub w={151}>CopyRight© GA Informática</ScreenSub>
      </HeaderText>
      <Spring />
      <ToolIcons>
        <Slot $mt={16}><Pixels rows={RED_ARROW} /></Slot>
        <Slot $ml={13} $mt={2}><Dolly /></Slot>
        <Slot $ml={3} $mt={3}><Cart /></Slot>
        <Slot $ml={4} $mt={6}><Molecule /></Slot>
        <Slot $ml={6} $mt={4}><Puzzle /></Slot>
        <Slot $ml={7} $mt={6}><SearchLayers /></Slot>
        <Slot $ml={13} $mt={12}><ZoomIcon /></Slot>
        <Slot $ml={10} $mt={1}><GlobeMail /></Slot>
        <Slot $ml={-1} $mt={1}><SmsPhone /></Slot>
      </ToolIcons>
    </HeaderBar>
    <NumberBar>
      <Drop $mt={4}><BarCaption w={50}>Número</BarCaption></Drop>
      <Field $w={89} $ml={6} $bg="#ffffe1" $right><Value w={35}>28161</Value></Field>
      <Slot $ml={2} $mt={8}><Pixels rows={HAND} /></Slot>
      <Spring />
      <Slot $mt={4}><Pixels rows={HELP} /></Slot>
      <Slot $ml={8} $mt={4}><HelpBook /></Slot>
    </NumberBar>
  </>
);

const Order = () => (
  <OrderPanel>
    <OrderForm>
      <Line $h={26} $pl={4} $pt={2}>
        <Drop $mt={2}><Caption w={62}>Prescrição</Caption></Drop>
        <Field $w={89} $ml={3} />
        <Slot $ml={5} $mt={7}><Pixels rows={HAND} /></Slot>
        <Drop $mt={3}><Caption w={40} ml={43}>Pedido</Caption></Drop>
        <Field $w={89} $ml={3} />
        <Slot $ml={5} $mt={7}><Pixels rows={HAND} /></Slot>
        <TinyButton $ml={5} $mt={1}><CheckMark /></TinyButton>
        <Drop $mt={3}><UnitCaption w={155} ml={30}>Unidade de Estoque</UnitCaption></Drop>
        <Drop $mt={2}><Field $w={102} $ml={1}><Value w={7}>1</Value></Field></Drop>
      </Line>
      <Line $h={24} $pl={39}>
        <Drop $mt={3}><Caption w={27}>Data</Caption></Drop>
        <Field $w={89} $ml={3}><Value w={64}>27/01/2023</Value></Field>
        <Drop $mt={3}><Caption w={41} ml={6}>Horário</Caption></Drop>
        <Field $w={65} $ml={2}><Value w={31}>11:44</Value></Field>
        <Drop $mt={3}><Caption w={24} ml={181}>Tipo</Caption></Drop>
        <Drop $mt={1}><Select><SelectValue><Value w={43}>1-Saida</Value></SelectValue><Arrow><Chevron /></Arrow></Select></Drop>
      </Line>
      <Line $h={26} $pl={15}>
        <Drop $mt={3}><Caption w={51}>C. Custo</Caption></Drop>
        <Field $w={50} $ml={2} $right><Value w={14}>36</Value></Field>
        <Combo $w={570} $ml={2}><Value w={207}>QUIMIO/ALTO CUSTO E OUTROS</Value><Arrow $boxed><Chevron /></Arrow></Combo>
      </Line>
    </OrderForm>
    <Slot $ml={13} $mt={5}><Barcode w={117} h={70} /></Slot>
    <LotCheck>
      <GreenFrame><Barcode w={83} h={48} soft /></GreenFrame>
      <GreenNote w={169}>Preencher Lote e validade</GreenNote>
    </LotCheck>
  </OrderPanel>
);

const Care = () => (
  <CareGroup>
    <CareLegend><Value w={93}>ATENDIMENTO</Value></CareLegend>
    <Line $h={24} $pl={23}>
      <Drop $mt={4}><Caption w={45}>Número</Caption></Drop>
      <Field $w={70} $ml={2} $right><Value w={42}>329484</Value></Field>
      <TinyButton $ml={2} $mt={1}><Calendar /></TinyButton>
      <TinyButton $ml={2} $mt={2}><Binoculars /></TinyButton>
      <Drop $mt={4}><Value w={200} ml={7}>ANA MARTINS PEREIRA SOUSA</Value><Caption w={24} ml={171}>Tipo</Caption><Value w={78} ml={2}>Ambulatório</Value></Drop>
    </Line>
    <Line $h={18} $pl={12}>
      <Caption w={56}>Admissão</Caption><Value w={64} ml={2}>27/01/2023</Value>
      <Caption w={27} ml={58}>Hora</Caption><Value w={31} ml={2}>11:43</Value>
      <Caption w={21} ml={136}>CID</Caption>
      <Caption w={90} ml={88}>Codigo Principal</Caption><Value w={68} ml={3}>99.00.002-1</Value>
    </Line>
    <Line $h={17} $pl={16}>
      <Caption w={52}>Convênio</Caption><Value w={147} ml={2}>UNIMED DO SUDOESTE</Value>
      <Caption w={115} ml={77}>Médico Responsável</Caption><Value w={143} ml={3}>DAIANA VIANA SOUTO</Value>
    </Line>
    <Line $h={22} $pl={3}>
      <Drop $mt={3}><Caption w={65}>Tratamento</Caption></Drop>
      <Field $w={50} $ml={3} $right $color={NAVY}><Value w={7}>0</Value></Field>
      <Combo $w={570} $ml={1}><span /><Arrow $boxed><Chevron /></Arrow></Combo>
    </Line>
  </CareGroup>
);

const HEADS: { t: string; w: number; right?: boolean }[] = [
  { t: "Cod. Prod.", w: 62 }, { t: "Descrição do Produto", w: 125 }, { t: "Unidade", w: 47 }, { t: "Quant.", w: 39, right: true },
  { t: "Saldo", w: 33, right: true }, { t: "Rastreabilidade", w: 89 }, { t: "Lote", w: 25 }, { t: "Validade", w: 50 }, { t: "Falta", w: 30 },
  { t: "CT", w: 16 }, { t: "Alta", w: 24 }, { t: "", w: 0 }, { t: "Prescritor", w: 57 },
];

const Items = () => (
  <ItemsFrame>
    <ItemsTitle>
      <Drop $mt={4}><PanelTitle w={196}>Saidas de Itens Individuais</PanelTitle></Drop>
      <Spring />
      <Drop $mt={1}><PanelTitle w={271}>Dispensa Direto por Codigo de Barras</PanelTitle></Drop>
      <CheckBox $ml={3} $mt={5} />
      <Slot $ml={12} />
    </ItemsTitle>
    <ItemsBody>
      <SideTools>
        <Slot $mt={5}><Pixels rows={HELP} /></Slot>
        <Slot $mt={11}><Pixels rows={SUN} /></Slot>
        <Slot $mt={12} $ml={1}><Pixels rows={DISK} /></Slot>
        <Slot $mt={8} $ml={4}><Pixels rows={CLIP} /></Slot>
        <Slot $mt={10}><Pixels rows={TRASH} /></Slot>
        <Slot $mt={10}><Pixels rows={BULB} /></Slot>
        <Slot $mt={12}><Pixels rows={FLASK} /></Slot>
      </SideTools>
      <GridArea>
        <div>
          <GridHead>
            <span />
            {HEADS.map((h, i) => <HeadCell key={i} $right={h.right}>{h.t && <HeadText w={h.w}>{h.t}</HeadText>}</HeadCell>)}
          </GridHead>
          <GridRow>
            <MarkerCell $flat $bg="#2065b0"><svg width="8" height="18"><path d="M1 3.500v11l5.500-5.500z" /></svg></MarkerCell>
            <Cell $flat $right $bg="#0078d7"><CellText w={21}>812</CellText></Cell>
            <Cell><CellBold w={159}>ANASTROZOL 1,0 MG COMP</CellBold></Cell>
            <Cell><CellText w={67}>COMPRIMID</CellText></Cell>
            <Cell $right><CellText w={14}>60</CellText></Cell>
            <Cell $right><CellText w={28}>1050</CellText></Cell>
            <Cell />
            <Cell><CellText w={42}>808554</CellText></Cell>
            <Cell><CellText w={62}>01/08/2024</CellText></Cell>
            <Cell /><Cell $bg="#fff" /><Cell $bg="#fff" /><Cell /><Cell />
          </GridRow>
        </div>
        <Scroll><Thumb /></Scroll>
      </GridArea>
    </ItemsBody>
  </ItemsFrame>
);

const Bottom = () => (
  <>
    <TabStrip $h={44} $bg="#f9f9f9" $pl={4}>
      <Tab $w={118} $h={40} $active><Value w={103}>Itens Individuais</Value></Tab>
      <Tab $w={47} $h={40}><Value w={24}>Kits</Value><Slot $ml={14} /></Tab>
      <Tab $w={63} $h={40}><Value w={51}>Resumo</Value></Tab>
      <Tab $w={91} $h={40}><Value w={81}>Observações</Value></Tab>
    </TabStrip>
    <Toolbar>
      <Group $w={171} $sep>
        <NavCaption w={70}>Navegando...</NavCaption>
        <Buttons $ml={1}>
          <PushButton><NavArrow kind="first" /></PushButton><PushButton><NavArrow kind="prev" /></PushButton>
          <PushButton><NavArrow kind="next" /></PushButton><PushButton><NavArrow kind="last" /></PushButton>
        </Buttons>
      </Group>
      <Group $w={136} $sep $pl={7}>
        <SmallCaption w={26}>Ação</SmallCaption>
        <Buttons><PushButton><NewIcon /></PushButton><PushButton><PencilIcon /></PushButton><PushButton><BinIcon /></PushButton></Buttons>
      </Group>
      <Group $w={93} $sep $pl={7}>
        <SmallCaption w={61}>Confirmação</SmallCaption>
        <Buttons $ml={1}><PushButton $faint><FloppyIcon /></PushButton><PushButton $faint><StopHand /></PushButton></Buttons>
      </Group>
      <Group $w={124} $pl={4}>
        <SmallCaption w={50} ml={2}>Impressão</SmallCaption>
        <PrintButton $w={118} $mt={1}>
          <Slot $mt={7}><Printer /></Slot>
          <CheckStack><CheckBox /><CheckBox /></CheckStack>
        </PrintButton>
      </Group>
      <PushButton $w={66} $ml={6} $mt={17}><SmallCaption w={49}>Assinatura</SmallCaption><SmallCaption w={47}>Eletrônica</SmallCaption></PushButton>
      <PushButton $w={48} $ml={4} $mt={17}><SmallBold w={44}>Etiqueta</SmallBold></PushButton>
      <PushButton $w={48} $ml={4} $mt={17}><SmallBold w={44}>Etiqueta</SmallBold><SmallBold w={39}>s/ soro</SmallBold></PushButton>
      <Legend>
        <LegendRow><Dot $c="#808000" /><Caption w={90}>Ponto de Pedido</Caption></LegendRow>
        <LegendRow><Dot $c="#ff0000" /><Caption w={83}>Saldo Negativo</Caption></LegendRow>
      </Legend>
      <PrintedBadge><SmallCaption w={44}>Impresso</SmallCaption></PrintedBadge>
      <PushButton $w={80} $ml={12} $mt={17}><Value w={72}>Destravar ?</Value></PushButton>
      <Cost><Caption w={33}>Custo</Caption><CostValue w={42}>0,00</CostValue></Cost>
      <Spring />
      <PushButton $w={103} $h={52} $mt={4}><SmallBold w={94}>Etiqueta Paciente</SmallBold></PushButton>
      <PushButton $w={45} $h={52} $mt={4} $ml={8}><SmallBold w={27}>Lista</SmallBold></PushButton>
      <Slot $ml={4} />
    </Toolbar>
    <TabStrip $h={43} $bg="#fff" $pl={0}>
      <Tab $w={51} $h={40} $top={14} $active><Value w={35}>Ficha</Value></Tab>
      <Tab $w={139} $h={40} $top={10}><Value w={129}>Lista Ultimas Saidas</Value></Tab>
      <Tab $w={97} $h={40} $top={10}><Value w={86}>Lista Pedidos</Value></Tab>
      <Tab $w={129} $h={40} $top={10}><Value w={117}>Prescrição Médica</Value></Tab>
      <Tab $w={95} $h={40} $top={10}><Value w={85}>Aprazamento</Value></Tab>
    </TabStrip>
    <StatusBar>
      <StatusText w={278}>Usuário:229 FRANCISCO PETRONIO SANTOS SILVA</StatusText>
      <Drop $mt={3}><StatusText w={60} ml={97}>Estoque n° 1</StatusText></Drop>
      <Spring />
      <StatusText w={423}>UNIMED SUDOESTE - CopyRight© Antonio Ribeiro dos Santos Jr. - Versão: 2.1.2.42</StatusText>
    </StatusBar>
    <StatusEdge />
  </>
);

export default function App() {
  return (
    <Window>
      <Global />
      <Top />
      <Order />
      <Care />
      <Items />
      <Bottom />
      <EdgeHandle />
      <DialogShade />
      <Dialog>
        <DialogTitle>
          <DialogText w={43}>Atenção</DialogText>
          <Slot $mt={2}><Cross s={11} c="#222" /></Slot>
        </DialogTitle>
        <DialogBody>
          <Slot><Warning /></Slot>
          <Drop $mt={3}><DialogText w={155} ml={12}>Pedido ainda não dispensado</DialogText></Drop>
        </DialogBody>
        <DialogFoot><OkButton><OkFocus><OkText w={15}><u>O</u>k</OkText></OkFocus></OkButton></DialogFoot>
      </Dialog>
      <Notice><NoticeText w={110}>7 novas notificações</NoticeText></Notice>
    </Window>
  );
}
